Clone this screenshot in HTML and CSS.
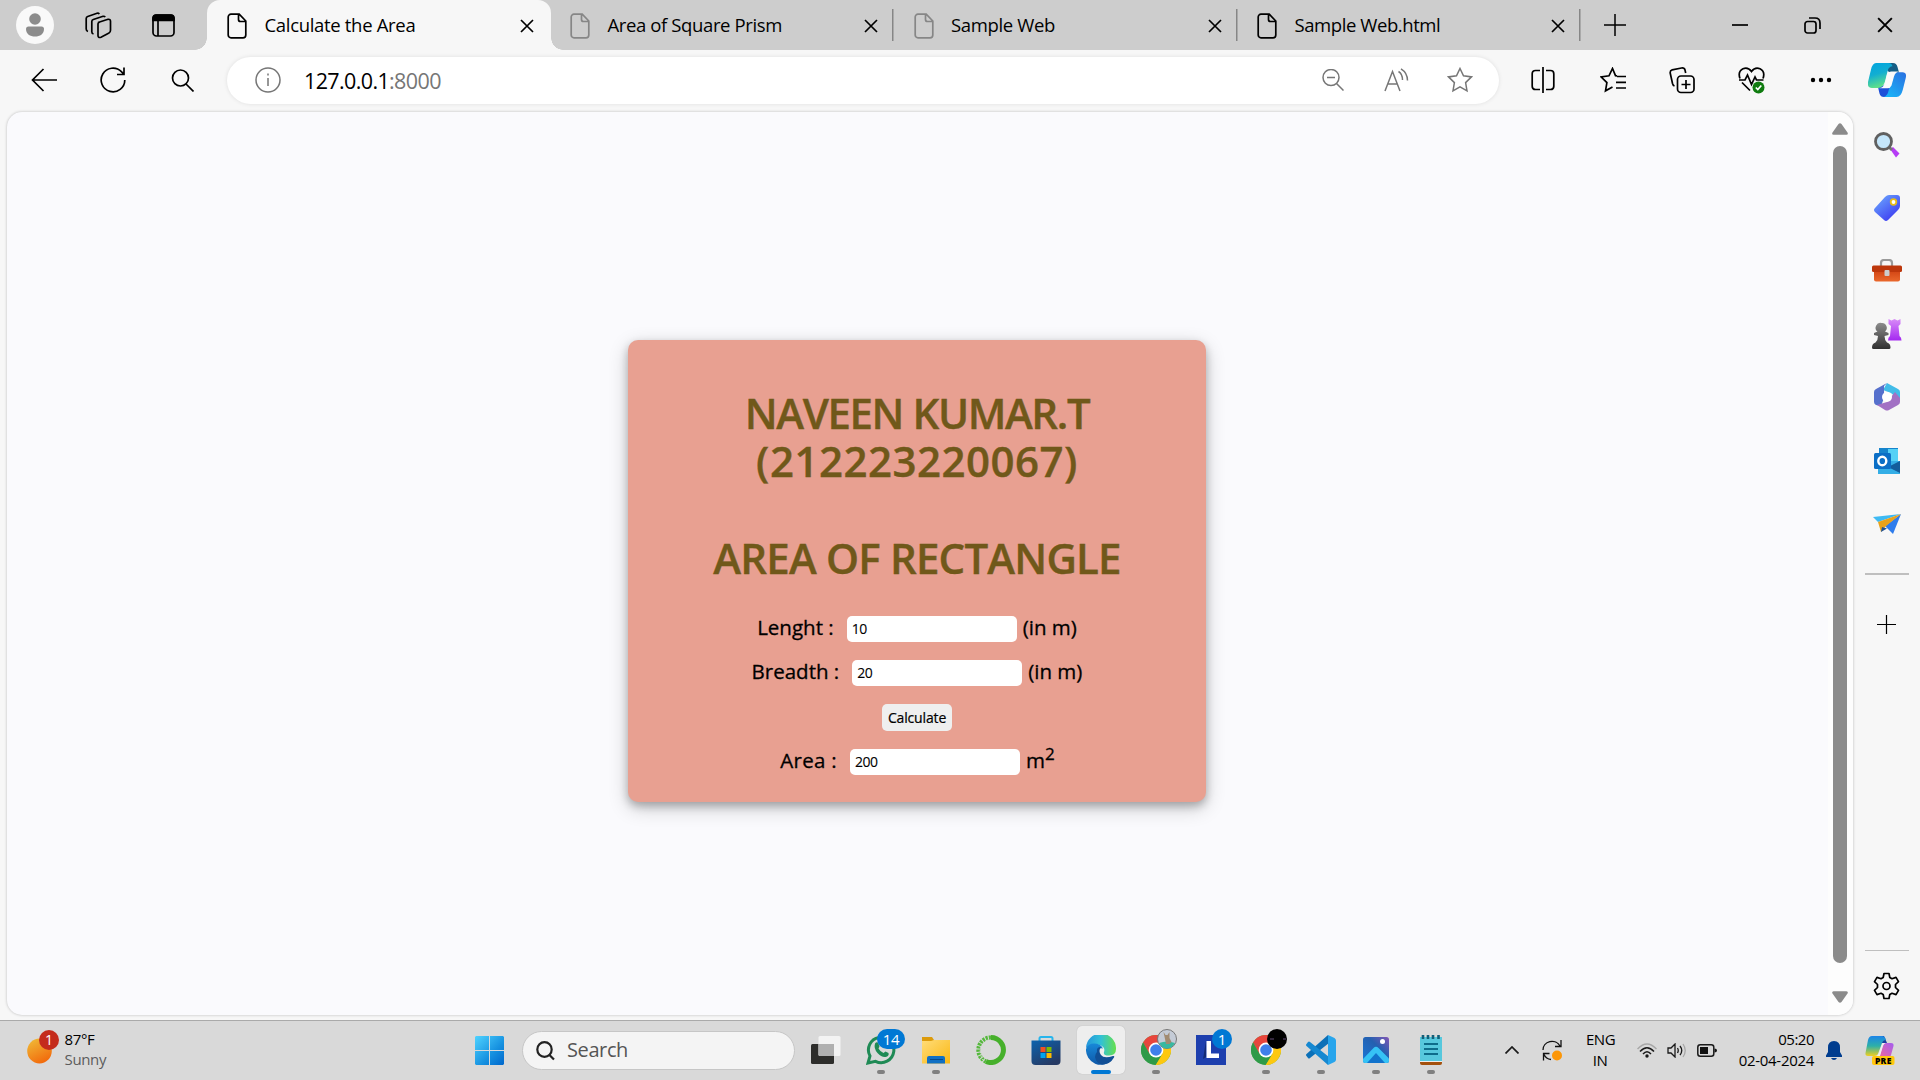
FILE: index.html
```html
<!DOCTYPE html>
<html lang="en">
<head>
<meta charset="utf-8">
<title>Calculate the Area</title>
<link rel="stylesheet" href="styles.css">
</head>
<body>
<svg width="0" height="0" class="defs">
  <defs>
    <linearGradient id="gTeal" x1="0" y1="0" x2=".3" y2="1"><stop offset="0" stop-color="#00a5e0"/><stop offset=".5" stop-color="#12aed2"/><stop offset="1" stop-color="#5fe089"/></linearGradient>
    <linearGradient id="gBlue" x1="1" y1="0" x2=".2" y2="1"><stop offset="0" stop-color="#2a6fe0"/><stop offset="1" stop-color="#19b4f8"/></linearGradient>
    <linearGradient id="gTag" x1="0" y1="0" x2=".8" y2="1"><stop offset="0" stop-color="#6fb0ff"/><stop offset="1" stop-color="#3a35f0"/></linearGradient>
    <linearGradient id="gBox" x1="0" y1="0" x2="0" y2="1"><stop offset="0" stop-color="#c9380c"/><stop offset="1" stop-color="#ea682c"/></linearGradient>
    <linearGradient id="gPurple" x1="0" y1="0" x2="0" y2="1"><stop offset="0" stop-color="#d88cf8"/><stop offset="1" stop-color="#a428f0"/></linearGradient>
    <linearGradient id="gPawn" x1="0" y1="0" x2="0" y2="1"><stop offset="0" stop-color="#8c8c8c"/><stop offset="1" stop-color="#303030"/></linearGradient>
    <linearGradient id="gWin" x1="0" y1="0" x2="1" y2="1"><stop offset="0" stop-color="#4fd3ff"/><stop offset=".6" stop-color="#1691e0"/><stop offset="1" stop-color="#0067cc"/></linearGradient>
    <linearGradient id="gSun" x1=".1" y1="0" x2=".6" y2="1"><stop offset="0" stop-color="#f0bc38"/><stop offset="1" stop-color="#f26a0c"/></linearGradient>
    <linearGradient id="gStore" x1="0" y1="0" x2=".6" y2="1"><stop offset="0" stop-color="#0c63ae"/><stop offset="1" stop-color="#263a64"/></linearGradient>
    <linearGradient id="gEdge" x1="0" y1="0" x2="1" y2="0"><stop offset="0" stop-color="#2494dc"/><stop offset=".5" stop-color="#31c1d6"/><stop offset="1" stop-color="#66e04c"/></linearGradient>
    <linearGradient id="gEdge2" x1="0" y1="0" x2="0" y2="1"><stop offset="0" stop-color="#1888d8"/><stop offset="1" stop-color="#0f58a8"/></linearGradient>
    <linearGradient id="gFolder" x1="0" y1="0" x2="1" y2="1"><stop offset="0" stop-color="#ffdc78"/><stop offset="1" stop-color="#fbb814"/></linearGradient>
    <linearGradient id="gPhoto" x1="0" y1="1" x2="1" y2="0"><stop offset="0" stop-color="#1a78d8"/><stop offset=".6" stop-color="#2460b0"/><stop offset="1" stop-color="#8456b4"/></linearGradient>
    <linearGradient id="gPink" x1="1" y1="0" x2="0" y2="1"><stop offset="0" stop-color="#a45cf0"/><stop offset="1" stop-color="#f86a90"/></linearGradient>
    <linearGradient id="gRain" x1="0" y1="0" x2="0" y2="1"><stop offset="0" stop-color="#1c84e8"/><stop offset=".5" stop-color="#2db0a8"/><stop offset="1" stop-color="#f0d020"/></linearGradient>
    <symbol id="file" viewBox="0 0 20 26"><path d="M4 1.2h8.2L18.8 8v14a2.8 2.8 0 0 1-2.8 2.8H4A2.8 2.8 0 0 1 1.2 22V4A2.8 2.8 0 0 1 4 1.2zM11.5 1.5v5a2 2 0 0 0 2 2h5"/></symbol>
    <symbol id="cross" viewBox="0 0 14 14"><path d="M1 1l12 12M13 1L1 13"/></symbol>
    <symbol id="chrome" viewBox="0 0 30 30"><circle cx="15" cy="15" r="15" fill="#4caf50"/><path d="M15 15L2 7.5A15 15 0 0 1 28.1 7.7z" fill="#e8453c"/><path d="M15 7.7h13.1A15 15 0 0 1 14.5 30L21.5 18.5z" fill="#fdc810"/><path d="M2 7.5L8.5 18.8 15 15z" fill="#e8453c"/><path d="M2 7.5L9 20c2 2 8 3 11 1L14.5 30A15 15 0 0 1 2 7.5z" fill="#2e9a48"/><circle cx="15" cy="15" r="7.4" fill="#fff"/><circle cx="15" cy="15" r="5.8" fill="#3f7fea"/></symbol>
  </defs>
</svg>
<div class="browser">
  <header class="tabbar">
    <div class="tab-tools">
      <span class="avatar"><svg width="18" height="24" viewBox="0 0 18 24" fill="#8c8c8c"><circle cx="9" cy="6" r="5.8"/><path d="M2.500 13.500h13q2.500 0 2.500 2.500C18 21 14 23.500 9 23.500S0 21 0 16q0-2.500 2.500-2.500z"/></svg></span>
      <svg class="ln workspaces" width="27" height="27" viewBox="0 0 27 27"><path d="M13 10.500l10-3.200q2.500-.4 2.500 2v9q0 2-1.500 2.700l-8 4.200q-3 1-3-1.700V12q0-1 .8-1.500z"/><path d="M8.500 22q-1.700-.5-1.700-2.300V9.500q0-1.500 1.500-2l9.700-3.200q1.500-.3 2.200.8"/><path d="M3 19.500Q1.200 19 1.200 17V6.500q0-1.500 1.500-2L12 1.300q1.500-.4 2.300.8"/></svg>
      <svg class="ln" width="23" height="23" viewBox="0 0 23 23"><rect x="1" y="1" width="21" height="21" rx="3.500"/><path d="M1 6.500V4q0-3 3-3h15q3 0 3 3v2.500z" fill="#000"/><path d="M6 6v16" /></svg>
    </div>
    <div class="tab tab-active">
      <svg class="ln" width="20" height="26"><use href="#file"/></svg><span class="tab-title t1">Calculate the Area</span><svg class="ln" width="14" height="14"><use href="#cross"/></svg>
    </div>
    <div class="tab tab-sep">
      <svg class="ln dim" width="20" height="26"><use href="#file"/></svg><span class="tab-title t2">Area of Square Prism</span><svg class="ln" width="14" height="14"><use href="#cross"/></svg>
    </div>
    <div class="tab tab-sep">
      <svg class="ln dim" width="20" height="26"><use href="#file"/></svg><span class="tab-title t3">Sample Web</span><svg class="ln" width="14" height="14"><use href="#cross"/></svg>
    </div>
    <div class="tab tab-sep">
      <svg class="ln" width="20" height="26"><use href="#file"/></svg><span class="tab-title t4">Sample Web.html</span><svg class="ln" width="14" height="14"><use href="#cross"/></svg>
    </div>
    <svg class="ln newtab" width="22" height="22" viewBox="0 0 22 22"><path d="M11 0v22M0 11h22"/></svg>
    <div class="winctl">
      <span><svg class="ln" width="16" height="16"><path d="M0 8h16"/></svg></span>
      <span><svg class="ln" width="17" height="17"><rect x="1" y="4.500" width="11" height="11.500" rx="2.500"/><path d="M5 1h6q5 0 5 5v6"/></svg></span>
      <span><svg class="ln" width="16" height="16" viewBox="0 0 14 14"><use href="#cross"/></svg></span>
    </div>
  </header>

  <nav class="toolbar">
    <span class="tb"><svg class="ln" width="26" height="24" viewBox="0 0 26 24"><path d="M12.500 1L1.500 12l11 11M1.500 12H26"/></svg></span>
    <span class="tb"><svg class="ln" width="26" height="26" viewBox="0 0 26 26"><path d="M24.800 13a11.800 11.800 0 1 1-3.400-8.300L24 7.500M24 .5v7h-7"/></svg></span>
    <span class="tb"><svg class="ln" width="23" height="23" viewBox="0 0 23 23"><circle cx="9.500" cy="9" r="8"/><path d="M15 15l7.500 7.500"/></svg></span>
    <div class="address">
      <svg class="ln grey" width="26" height="26" viewBox="0 0 26 26"><circle cx="13" cy="13" r="12"/><path d="M13 11v8M13 6.500v2"/></svg>
      <span class="url">127.0.0.1<i>:8000</i></span>
      <span class="addr-icons">
        <svg class="ln grey" width="22" height="22" viewBox="0 0 22 22"><circle cx="9" cy="8.500" r="8"/><path d="M14.500 14.500l7 7M5 8.500h8"/></svg>
        <svg class="ln grey" width="25" height="24" viewBox="0 0 25 24"><path d="M1 23L8.500 3.500 16 23M4 16h9.500M14.500 3.500q4 2.500 4 8.500M17 .8q6.500 4 6.500 11.700"/></svg>
        <svg class="ln grey" width="26" height="26" viewBox="0 0 26 26"><path d="M13 1.500l3.500 7.300 8 1.100-5.900 5.700 1.400 8.200-7-3.900-7 3.900 1.400-8.200L1.500 9.900l8-1.100z"/></svg>
      </span>
    </div>
    <span class="tb first"><svg class="ln" width="24" height="26" viewBox="0 0 24 26"><path d="M12 0v26M9 3.500H4.500q-3.300 0-3.300 3.300v12.400q0 3.300 3.300 3.300H9M15 3.500h4.500q3.300 0 3.300 3.300v12.400q0 3.300-3.300 3.300H15"/></svg></span>
    <span class="tb"><svg class="ln" width="26" height="26" viewBox="0 0 26 26"><path d="M17 8.800l-1.500-.2L12.500 1.500 9 8.800l-8 1.100 5.900 5.700-1.400 8.200 7-3.900M17 9.500h9M16 15.300h10M16 21h10"/></svg></span>
    <span class="tb"><svg class="ln" width="26" height="27" viewBox="0 0 26 27"><rect x="8.500" y="9" width="16.500" height="16.500" rx="3.500"/><path d="M17 13v9M12.500 17.500h9M5.500 19Q4 18.500 3.500 16.500L1.200 6q-.3-2.500 2-3.200L12.500 1q3-.3 3.500 2l.7 3"/></svg></span>
    <span class="tb"><svg class="ln" width="27" height="27" viewBox="0 0 27 27"><path d="M2 11.500Q-.5 4.500 5 1.800 10-.2 13.500 4.500 17-.2 22 1.800q5.500 2.700 3 9.700M1 13h6l2.500-5 4 9.500 3.500-7.500 1.500 3h7M4 15.500l8 8"/><circle cx="20.500" cy="20.500" r="6" fill="#107c10" stroke="none"/><path d="M17.800 20.500l2 2 3.500-4" stroke="#fff"/></svg></span>
    <span class="tb"><svg width="22" height="6"><circle cx="3" cy="3" r="2.200"/><circle cx="11" cy="3" r="2.200"/><circle cx="19" cy="3" r="2.200"/></svg></span>
    <span class="tb pilot"><svg width="38" height="34" viewBox="0 0 38 34"><path d="M18 0h7q3.500 0 4.500 4l1.500 5.500-9 .5-6-6z" fill="#155d85"/><path d="M13 23q4 0 5-3.500L22 9h5l-7 25h-4q-3.500 0-4.500-3.500L10 24z" fill="#1d50d8"/><path d="M8 0h12.500q3 0 4 3.200-3.500.3-4.700 4L17 18.500Q15.200 25 10 25H4q-5 0-4-6L3 6.500Q4.500 0 8 0z" fill="url(#gTeal)"/><path d="M28 9.300h6.500q4.500 0 3.300 5.500l-3 12Q33 34 28.500 34H15.500q3.500-.8 4.700-5l3.800-14q1.500-5.700 4-5.700z" fill="url(#gBlue)"/><path d="M19 11.500q1-3 4.500-3H32q-4.500 0-6 5l-2.500 9q-1 2.700-4 2.700H11q4.500-.5 6-5.200z" fill="#fafafa"/></svg></span>
  </nav>

  <main class="stage">
    <section class="page">
      <div class="viewport">
        <form class="card">
          <h1><span class="h-a">NAVEEN KUMAR.T</span><span class="h-b">(212223220067)</span></h1>
          <h1><span class="h-c">AREA OF RECTANGLE</span></h1>
          <div class="row"><label class="l1">Lenght :</label><span class="field">10</span><span class="unit">(in m)</span></div>
          <div class="row"><label class="l2">Breadth :</label><span class="field">20</span><span class="unit">(in m)</span></div>
          <div class="row"><button type="button">Calculate</button></div>
          <div class="row last"><label class="l3">Area :</label><span class="field">200</span><span class="unit">m<sup>2</sup></span></div>
        </form>
      </div>
      <div class="scroll">
        <svg width="16" height="12"><path d="M6.500 1q1.500-1.500 3 0l6 8.500q1 2-1 2.300h-13q-2-.3-1-2.300z" fill="#8b8b8b"/></svg>
        <div class="thumb"></div>
        <svg width="16" height="12"><path d="M6.500 11q1.500 1.500 3 0l6-8.500q1-2-1-2.300h-13q-2 .3-1 2.300z" fill="#8b8b8b"/></svg>
      </div>
    </section>
    <aside class="sidebar">
      <span><svg width="26" height="26" viewBox="0 0 26 26"><path d="M16 17l3-2 6.500 6.500-3.500 4z" fill="#b63cf5"/><path d="M14 14l4 4" stroke="#777" stroke-width="3"/><circle cx="9.500" cy="9.500" r="8" fill="#c4e6fb" stroke="#606060" stroke-width="2.800"/></svg></span>
      <span><svg width="26" height="26" viewBox="0 0 26 26"><path d="M15 0h8q3 0 3 3v8q0 2-2 4L14 25q-2 2-4 0l-9-8q-2-2 0-4L11 2q2-2 4-2z" fill="url(#gTag)"/><circle cx="19.500" cy="7" r="2.800" fill="#fff" stroke="#e8bc18" stroke-width="1.800"/></svg></span>
      <span><svg width="30" height="23" viewBox="0 0 30 23"><path d="M9 8V4q0-3 3-3h5q3 0 3 3v4" fill="none" stroke="#9a9a9a" stroke-width="2.200"/><rect x="2" y="8" width="26" height="14.500" rx="2" fill="url(#gBox)"/><rect x="0" y="6.500" width="30" height="6.500" rx="1.500" fill="#bd370c"/><rect x="12.500" y="11" width="5" height="6" rx="1" fill="#ccc"/></svg></span>
      <span><svg width="30" height="30" viewBox="0 0 30 30"><path d="M16.500 0l3 1.500L22.500 0l3 1.500L28.500 0v5l-2 2 1 10q2 1 2 4.500H16q0-3.500 2-4.500l1-10-2.500-2z" fill="url(#gPurple)"/><path d="M9.500 4a4.800 4.800 0 0 1 3.500 8.500l3.500 1.500v2l-4 1q0 4 2.500 6.500 3.500 1 3.500 5 0 1.500-1.500 1.500H1.500Q0 30 0 28.500q0-4 3.500-5Q6 21 6 17l-4-1v-2l3.500-1.500A4.800 4.800 0 0 1 9.500 4z" fill="url(#gPawn)"/></svg></span>
      <span><svg width="26" height="28" viewBox="0 0 26 28"><path d="M13 0L24 6q2 1 2 3v9l-9-8-8-3z" fill="#42bce8"/><path d="M13 0L2 6Q0 7 0 9v10q0 2 2 3l5 1 3-8V3z" fill="#5670cc"/><path d="M26 15v4q0 2-2 3l-9 5q-2 1-4 0l-8-5 10-3 8-10z" fill="#a270c4"/><circle cx="13" cy="14" r="5" fill="#fff"/></svg></span>
      <span><svg width="26" height="26" viewBox="0 0 26 26"><rect x="5" width="19" height="20" fill="#1684cc"/><path d="M14 1h10v13H14z" fill="#55d1f6"/><path d="M4 13h22v13H4z" fill="#34aee6"/><path d="M26 13v12L14 19z" fill="#135d9c"/><rect x="0" y="5" width="17" height="16" rx="1.500" fill="#0b6fc6"/><ellipse cx="8.300" cy="13" rx="4" ry="4.300" fill="none" stroke="#fff" stroke-width="2.400"/></svg></span>
      <span><svg width="28" height="20" viewBox="0 0 28 20"><path d="M0 3L28 0 5 8z" fill="#3ebaf3"/><path d="M28 0L20 20l-5-5-3-3z" fill="#2e7cec"/><path d="M28 0L5 8l3 10 5-6z" fill="#e9a21b"/><path d="M8 18l1-5 5 1.500z" fill="#1e5299"/></svg></span>
      <hr>
      <span class="add"><svg class="ln thin" width="19" height="19"><path d="M9.500 0v19M0 9.500h19"/></svg></span>
      <hr class="low">
      <span class="gear"><svg class="ln" width="27" height="28" viewBox="0 0 27 28"><path d="M11 1.500h5l.8 4 2.200 1.200 4-1.300 2.500 4.200-3 2.900v3l3 2.900-2.500 4.200-4-1.300-2.200 1.200-.8 4h-5l-.8-4L8 21.300l-4 1.300-2.500-4.200 3-2.900v-3l-3-2.900L4 5.400l4 1.300 2.200-1.200z" stroke-linejoin="round"/><circle cx="13.500" cy="14" r="3.500"/></svg></span>
    </aside>
  </main>
</div>

<footer class="taskbar">
  <div class="weather">
    <svg width="33" height="34" viewBox="0 0 33 34"><ellipse cx="12.500" cy="21" rx="12.300" ry="12.500" fill="url(#gSun)"/><circle cx="22" cy="10" r="10" fill="#c42b1c"/><text x="22" y="15" class="badge-t">1</text></svg>
    <div><b>87°F</b><span>Sunny</span></div>
  </div>
  <svg class="start" width="29" height="29"><path d="M1 0h13v14H0V1zM15 0h13l1 1v13H15zM0 15h14v14H1l-1-1zM15 15h14v13l-1 1H15z" fill="url(#gWin)"/></svg>
  <div class="search"><svg width="19" height="20" viewBox="0 0 19 20" fill="none" stroke="#222" stroke-width="2.200"><ellipse cx="8.500" cy="8.500" rx="7.200" ry="7.300"/><path d="M13 13.500l5 5"/></svg><span>Search</span></div>
  <div class="apps">
    <span class="app"><svg width="30" height="30"><rect x="0" y="9" width="23" height="20" rx="1.500" fill="#2d2d2b"/><rect x="7.500" y="1" width="22" height="20" rx="1.500" fill="#f3f3f3"/><path d="M7.500 9H23v12H9q-1.500 0-1.500-1.500z" fill="#b0b0b0"/></svg></span>
    <span class="app run"><svg width="30" height="30" viewBox="0 0 30 30"><path d="M2 28l2-7A12.700 12.700 0 1 1 9.500 26.300z" fill="none" stroke="#1f8a55" stroke-width="3"/><path d="M9 8.500q2-2.500 3.500 0l1 3-1 2q2 3.500 5 4.500l2-1.500 3 1.500q1 3-3 4-4 .5-8-4T9 8.500z" fill="#1f8a55"/></svg><em class="wide">14</em></span>
    <span class="app run"><svg width="30" height="30"><path d="M1 2h10l2 3v5H1z" fill="#dc9b0c"/><path d="M1 6h9l3-1h16v23.500H1z" fill="url(#gFolder)"/><path d="M6 28.500V23q0-2 2-2h14q2 0 2 2v5.500z" fill="#1170c4"/><path d="M9 24.500h13" stroke="#074a8b"/></svg></span>
    <span class="app"><svg width="30" height="30"><path d="M15 2.500A12.500 12.500 0 1 1 10 26.500" fill="none" stroke="#46b02b" stroke-width="5"/><path d="M15 2.500A12.500 12.500 0 0 0 10 26.500" fill="none" stroke="#55b83c" stroke-width="4.200" stroke-dasharray="2.200 1"/><path d="M12 5Q3 9 4.500 18T9 25" fill="none" stroke="#d9d9d9" stroke-width=".9" stroke-dasharray="3 1.500"/></svg></span>
    <span class="app"><svg width="30" height="30"><path d="M8.500 6V3.500q0-1.500 1.500-1.500h10q1.500 0 1.500 1.500V6" fill="none" stroke="#28b5ec" stroke-width="2"/><path d="M.5 5.500h29V26q0 4-4 4h-21q-4 0-4-4z" fill="url(#gStore)"/><path d="M9.500 12h5v5h-5z" fill="#f25022"/><path d="M15.500 12h5v5h-5z" fill="#7fba00"/><path d="M9.500 18h5v5h-5z" fill="#00a4ef"/><path d="M15.500 18h5v5h-5z" fill="#ffb900"/></svg></span>
    <span class="app run current"><svg width="30" height="30" viewBox="0 0 30 30"><path d="M0 13A15 15 0 0 1 30 14q0 6.500-7 6.500-6 0-5-3.500 1.500-4-3-6.500Q8 7.500 0 13z" fill="url(#gEdge)"/><path d="M0 14q2-5.500 8-5.500 6.500 0 9 5-5-1.500-6 4 0 7 8 9 4 1 7-1.500A15 15 0 0 1 0 14z" fill="url(#gEdge2)"/><path d="M11 17q-1-5 4-5-3 4 0 8t12 1q2-.5 1 1.500-4 7-12 7Q10 28 9 22q0-3 2-5z" fill="#114f96"/></svg></span>
    <span class="app run"><svg width="30" height="30"><use href="#chrome"/></svg><em class="pic"><svg width="20" height="20"><circle cx="10" cy="10" r="9.500" fill="#c4cbd6" stroke="#777"/><path d="M2 14q8-3 16 0-3 5.500-8 5.500T2 14z" fill="#38b8a0"/><path d="M6.500 3l2 3h2l2-3v6l2 4-2 2H9l-1-5z" fill="#a18b71"/></svg></em></span>
    <span class="app"><svg width="30" height="30"><path d="M0 0h30v30H0z" fill="#1d3fae"/><path d="M10 6v16l-3 2z" fill="#122b74"/><path d="M10.500 6H15v12.500h8V23H10.500z" fill="#fff"/></svg><em>1</em></span>
    <span class="app run"><svg width="30" height="30"><use href="#chrome"/></svg><em class="pic"><svg width="20" height="20"><circle cx="10" cy="10" r="10" fill="#000"/><path d="M3 10h4M16 10h3" stroke="#654c78"/></svg></em></span>
    <span class="app run"><svg width="30" height="30" viewBox="0 0 30 30"><path d="M22 0l1 8L4 23q-1 1-2 0l-1.500-2q-1-1 0-2z" fill="#0b70b8"/><path d="M22 30l1-8L4 7Q3 6 2 7L.5 9q-1 1 0 2z" fill="#1588d1"/><path d="M22 0l6.500 3q1.500 1 1.500 2.500v19q0 1.500-1.500 2.500L22 30z" fill="#28a5ec"/></svg></span>
    <span class="app run"><svg width="26" height="26"><rect width="26" height="26" rx="2.500" fill="url(#gPhoto)"/><path d="M0 22l10.500-11q2.500-2.500 5 0L26 21.500V24q0 2-2 2H2q-2 0-2-2z" fill="#36c2f5"/><path d="M13 16l-9 10h18z" fill="#1273cc"/><circle cx="19.500" cy="4.500" r="2.500" fill="#fff"/></svg></span>
    <span class="app run"><svg width="22" height="30"><path d="M0 26h22v2q0 2-2 2H2q-2 0-2-2z" fill="#a4510e"/><path d="M0 25h22v2H0z" fill="#eee"/><path d="M0 2h22v24H0z" fill="#57c8dd"/><path d="M3 0v4M8 0v4M13 0v4M18.500 0v4" stroke="#126079" stroke-width="2.600"/><path d="M4 9h14M4 14h14M4 19h14" stroke="#0e6c8a" stroke-width="1.800"/></svg></span>
  </div>
  <div class="tray">
    <svg class="chev" width="14" height="8" fill="none" stroke="#1a1a1a" stroke-width="1.700"><path d="M.5 7.500L7 1l6.500 6.500"/></svg>
    <svg class="sync" width="20" height="21" fill="none" stroke="#111" stroke-width="1.300"><path d="M1 10a9 8.500 0 0 1 17-4M19 0v6.500h-6M9 19.500Q4 19 2 14.500M1.500 20.500v-7h6"/><circle cx="15" cy="15.500" r="5" fill="#fc9607" stroke="none"/></svg>
    <div class="lang">ENG<br>IN</div>
    <svg class="wifi" width="20" height="15" fill="none" stroke="#1a1a1a" stroke-width="1.500"><path d="M.5 6q9.500-10 19 0" stroke="#a8a8a8"/><path d="M3 8.500q7-7.500 14 0M6 11q4-4.500 8 0"/><circle cx="10" cy="13" r="1.700" fill="#1a1a1a" stroke="none"/></svg>
    <svg class="vol" width="20" height="15" fill="none" stroke="#1a1a1a" stroke-width="1.300"><path d="M1 5h3l4-4v13l-4-4H1zM10.500 5q1.500 2.500 0 5M13 3q3.500 4.500 0 9"/><path d="M16 1q4.500 6.500 0 13" stroke="#a8a8a8"/></svg>
    <svg class="bat" width="20" height="13"><rect x=".8" y=".8" width="16" height="11.400" rx="2.500" fill="none" stroke="#1a1a1a" stroke-width="1.500"/><rect x="3" y="3" width="8" height="7" fill="#111"/><path d="M17.500 4.500q2.500 0 2.500 2t-2.500 2z" fill="#111"/></svg>
    <div class="clock">05:20<br><span>02-04-2024</span></div>
    <svg class="bell" width="16" height="19" fill="#003d8f"><path d="M8 0q6 0 6 6.500V11l2 3.500V16H0v-1.500L2 11V6.500Q2 0 8 0zM5 17h6q-1 2-3 2t-3-2z"/></svg>
    <svg class="pre" width="30" height="29" viewBox="0 0 30 29"><path d="M14 0h5l3 7h-8z" fill="#183fa0"/><path d="M7 0h10q3 0 4 4-3 0-4 3l-4 11q-1 2-4 2H3q-3 0-2.500-3L3 4q1-4 4-4z" fill="url(#gRain)"/><path d="M21 7h5q3 0 2.500 3L26 19q-1 4-4 4H12q2-1 3-4l3-10q1-2 3-2z" fill="url(#gPink)"/><path d="M17.500 7h3q-1.700.7-2.500 3l-3 10h-3.500q1.300-.5 2-2.500z" fill="#eee"/><rect x="7" y="20" width="22.500" height="9" rx="2" fill="#ffc80d"/><text x="18.300" y="27.700" class="pre-t">PRE</text></svg>
  </div>
</footer>
</body>
</html>
```
FILE: styles.css
```css
* { box-sizing: border-box; }
body {
  margin: 0; width: 1920px; height: 1080px; overflow: hidden;
  display: flex; flex-direction: column;
  font-family: "Open Sans", "Noto Sans", sans-serif; color: #000;
  background: #f7f7f7;
}
svg { display: block; flex: none; }
.defs { position: absolute; }
.ln { fill: none; stroke: #000; stroke-width: 1.7; }
.thin { stroke-width: 1.2; }
.dim { stroke: #868686; }
.grey { stroke: #767676; stroke-width: 1.5; }
.browser { height: 1020px; display: flex; flex-direction: column; }

/* Tab strip */
.tabbar { height: 50px; flex: none; display: flex; align-items: center; background: #cdcdcd; }
.tab-tools { width: 207px; height: 50px; padding-left: 16px; display: flex; align-items: center; }
.avatar { width: 38px; height: 38px; border-radius: 50%; background: #f9f9f9; display: flex; align-items: center; justify-content: center; }
.workspaces { margin: 0 40px 0 31px; }
.tab { width: 343.500px; height: 50px; padding: 2px 16.500px 0 19px; display: flex; align-items: center; }
.tab-active { position: relative; background: #f7f7f7; border-radius: 13px 13px 0 0; padding: 2px 17px 0 20px; width: 344px; }
.tab-active::before, .tab-active::after { content: ""; position: absolute; bottom: 0; width: 12px; height: 12px; }
.tab-active::before { left: -12px; background: radial-gradient(circle at 0 0, transparent 11.500px, #f7f7f7 12px); }
.tab-active::after { right: -12px; background: radial-gradient(circle at 100% 0, transparent 11.500px, #f7f7f7 12px); }
.tab-sep { background: linear-gradient(#868686, #868686) right 1px center / 1.500px 32px no-repeat; }
.tab-title { flex: 1; margin: -4px 0 0 17.500px; font-size: 18.500px; white-space: nowrap; }
.t1 { letter-spacing: -.32px; }
.t2 { letter-spacing: -.38px; }
.t3 { letter-spacing: -.35px; }
.t4 { letter-spacing: -.42px; }
.newtab { margin-left: 22px; margin-top: -1px; stroke-width: 1.500; }
.winctl { margin-left: auto; display: flex; }
.winctl span { width: 72.500px; display: flex; justify-content: center; }
.winctl span:last-child { width: 71px; }

/* Toolbar */
.toolbar { height: 61px; flex: none; display: flex; align-items: center; padding: 0 1px 1px 9px; }
.tb { width: 69.400px; display: flex; justify-content: center; }
.tb.first { margin-left: 9.500px; }
.pilot { width: 63px; }
.address {
  width: 1272px; height: 47px; margin-left: 9.800px; padding: 0 26px 0 28px;
  display: flex; align-items: center; border-radius: 24px; background: #fff;
  box-shadow: 0 0 4px rgba(0,0,0,.1);
}
.url { margin-left: 23px; font-size: 21.500px; letter-spacing: -.62px; }
.url i { font-style: normal; color: #767676; }
.addr-icons { margin-left: auto; display: flex; align-items: center; gap: 38px; }
.addr-icons svg:first-child { margin-right: 2px; }

/* Page frame */
.stage { flex: 1; display: flex; padding: 1px 0 0 7px; }
.page { width: 1846px; height: 903px; display: flex; overflow: hidden; background: #fafafd; border-radius: 15px; box-shadow: 0 0 3px rgba(0,0,0,.25); }
.viewport { flex: 1; display: flex; justify-content: center; align-items: flex-start; padding: 228px 1px 0 0; }
.scroll { width: 25px; background: #fdfdfd; display: flex; flex-direction: column; align-items: center; padding: 11px 1px 12px 0; }
.thumb { width: 14px; flex: 1; margin: 11px 0 28px; border-radius: 7px; background: #8b8b8b; }
.card {
  width: 578px; height: 462px; padding-top: 49px; border-radius: 10px; background: #e8a091;
  box-shadow: 0 4px 8px rgba(0,0,0,.24), 0 6px 20px rgba(0,0,0,.2);
}
h1 { margin: 0 0 49px; font-size: 42px; line-height: 48px; font-weight: 600; color: #70581a; text-align: center; white-space: nowrap; -webkit-text-stroke: .4px #70581a; }
h1 span { display: block; }
h1 + h1 { margin-bottom: 34px; }
.h-a { letter-spacing: -1.400px; }
.h-b { letter-spacing: .5px; }
.h-c { letter-spacing: -.8px; }
.row { height: 26px; margin-bottom: 18px; display: flex; justify-content: center; align-items: center; font-size: 20.500px; -webkit-text-stroke: .3px #000; }
.row.last { margin-top: 19px; padding-left: 1px; }
label { margin: -4px 13px 0 0; }
.l3 { letter-spacing: .3px; }
.unit { margin: -4px 0 0 6px; }
.unit sup { font-size: 17px; line-height: 0; }
.field { width: 170px; height: 26px; padding-left: 5px; border-radius: 5px; background: #fff; font-size: 14px; line-height: 26px; letter-spacing: -.5px; -webkit-text-stroke: .1px #000; }
button { width: 70px; height: 27px; padding: 1px 0 0; border: 0; border-radius: 5px; background: #efefef; font: 14px "Open Sans", sans-serif; letter-spacing: -.15px; color: #000; -webkit-text-stroke: .2px #000; }

/* Edge sidebar */
.sidebar { width: 67px; padding-top: 1px; display: flex; flex-direction: column; align-items: center; }
.sidebar span { height: 63.200px; display: flex; align-items: center; }
.sidebar hr { width: 44px; height: 2px; margin: 18px 0 0; border: 0; background: #bfbfbf; }
.sidebar .add { height: 99px; }
.sidebar .low { height: 1px; margin-top: auto; }
.sidebar .gear { height: 69px; }

/* Taskbar */
.taskbar { height: 60px; display: flex; align-items: center; background: #d9d9d9; border-top: 1px solid #aaa; font-size: 15px; }
.weather { width: 475px; padding-left: 27px; display: flex; align-items: center; }
.weather svg { margin-top: -8px; }
.weather div { margin: -3px 0 0 4.500px; line-height: 20px; letter-spacing: -.35px; }
.weather b { display: block; font-weight: 400; }
.weather span { color: #5c5c5c; letter-spacing: -.35px; }
.badge-t { fill: #fff; font-size: 14px; text-anchor: middle; }
.start { margin-top: -1px; }
.search { width: 273px; height: 39px; margin-left: 18px; padding-left: 13px; display: flex; align-items: center; border-radius: 20px; background: #f4f4f4; border: 1px solid #c6c6c6; }
.search span { margin: -2px 0 0 12px; font-size: 20px; letter-spacing: -.4px; color: #555; }
.apps { margin: -1px 0 0 7px; display: flex; }
.app { width: 48px; height: 48px; margin-right: 7px; display: flex; align-items: center; justify-content: center; position: relative; border-radius: 5px; }
.current { background: #eee; box-shadow: 0 0 1px #aaa; }
.run::after { content: ""; position: absolute; bottom: 0; width: 8px; height: 4px; border-radius: 2px; background: #808080; }
.current::after { width: 20px; background: #0078d4; }
.app em { position: absolute; left: 25px; top: 3px; width: 20px; height: 20px; border-radius: 10px; background: #0078d4; color: #fff; font-style: normal; font-size: 15px; line-height: 20px; text-align: center; letter-spacing: -.3px; }
.app .wide { left: 20px; width: 28px; }
.app .pic { background: none; }
.tray { margin: -1px 0 0 auto; display: flex; align-items: center; padding-right: 25px; }
.chev { margin-right: -1px; }
.sync { margin-left: 24px; }
.lang { width: 28px; margin: -1px 0 0 24px; line-height: 20.300px; text-align: center; letter-spacing: -.5px; }
.wifi { margin-left: 23px; }
.vol { margin-left: 10px; }
.bat { margin-left: 10px; }
.clock { width: 77px; margin: -1px 0 0 20px; line-height: 20.300px; text-align: right; letter-spacing: -.5px; white-space: nowrap; }
.clock span { letter-spacing: -.3px; }
.bell { margin-left: 12px; }
.pre { margin-left: 23px; }
.pre-t { font-size: 8.500px; font-weight: 800; text-anchor: middle; letter-spacing: .3px; }
```
